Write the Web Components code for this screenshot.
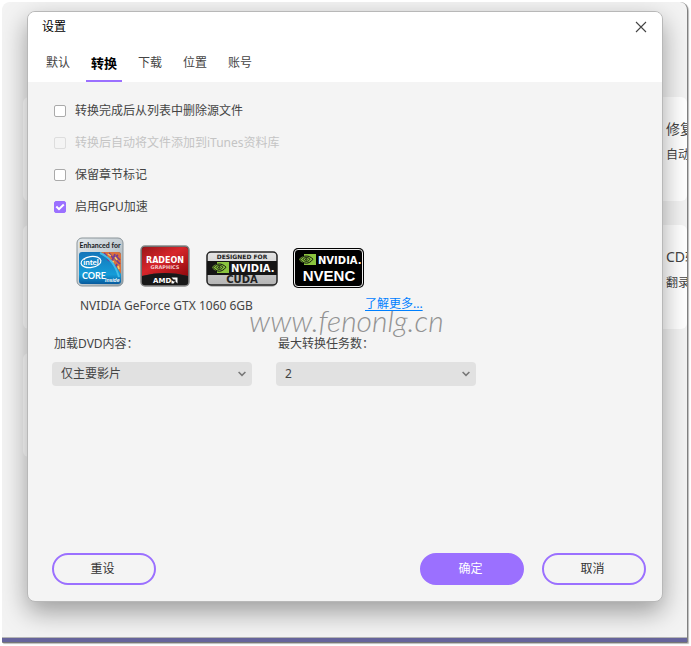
<!DOCTYPE html>
<html lang="zh-CN">
<head>
<meta charset="utf-8">
<title>设置</title>
<style>
html, body { height: 100%; }
body { margin: 0; padding: 2px 3px 3px 2px; box-sizing: border-box; background: #fff; color: #444; font: 12px/18px "Noto Sans", "Noto Sans CJK SC", sans-serif; }
</style>
</head>
<body>
<app-window>
  <feature-card></feature-card>
  <feature-card class="side"><span slot="title">修复</span>自动</feature-card>
  <feature-card></feature-card>
  <feature-card class="side"><span slot="title">CD转换</span>翻录</feature-card>
  <feature-card></feature-card>
  <settings-dialog slot="dialog"></settings-dialog>
</app-window>
<script>
function define(name, html, setup) {
  const template = document.createElement('template');
  template.innerHTML = html;
  customElements.define(name, class extends HTMLElement {
    constructor() {
      super();
      this.attachShadow({ mode: 'open' }).append(template.content.cloneNode(true));
    }
    connectedCallback() { if (setup) setup(this, this.shadowRoot); }
  });
}

define('feature-card', `
<style>
:host { display: block; background: #fff; border-radius: 6px; overflow: hidden; white-space: nowrap; padding-top: 21px; box-sizing: border-box; }
:host(.side) { padding-left: 67px; grid-column: 2; }
h3 { margin: 0 0 6px; font-size: 14px; line-height: 22px; font-weight: 400; }
</style>
<h3><slot name="title"></slot></h3><slot></slot>`);

define('app-window', `
<style>
:host { display: block; position: relative; box-sizing: border-box; height: 100%; min-height: 480px; background: #f3f3f3; border-right: 1px solid #808080; border-bottom: 1px solid #777; border-radius: 8px 8px 1px 1px; overflow: hidden; box-shadow: 1px 1px 1px #bbb; }
.home { display: grid; grid-template-columns: 1fr 88px; grid-auto-rows: 104px; gap: 24px 20px; padding: 95px 0 0 21px; }
.edge { position: absolute; inset: auto 0 0 0; height: 4px; background: #66649b; border-top: 1px solid #b5b5b5; }
</style>
<div class="home"><slot></slot></div>
<div class="edge"></div>
<slot name="dialog"></slot>`);

define('tab-strip', `
<style>
:host { display: flex; gap: 11px; padding: 0 13px; }
button { border: 0; background: none; padding: 4px 5px 0; height: 40px; font: inherit; color: #444; border-bottom: 2px solid transparent; }
button[aria-selected="true"] { font-size: 13px; font-weight: 700; color: #000; border-color: #9b70ff; }
</style>
<button role="tab">默认</button><button role="tab" aria-selected="true">转换</button><button role="tab">下载</button><button role="tab">位置</button><button role="tab">账号</button>`,
(host) => host.setAttribute('role', 'tablist'));

define('check-option', `
<style>
:host { display: block; }
label { display: flex; align-items: center; gap: 9px; height: 32px; width: max-content; }
.box { display: grid; width: 12px; height: 12px; }
input, svg { grid-area: 1 / 1; width: 12px; height: 12px; }
input { appearance: none; margin: 0; box-sizing: border-box; border: 1px solid #aaa; border-radius: 2px; background: #fff; }
input:checked { background: #9b70ff; border-color: #9b70ff; }
svg { visibility: hidden; pointer-events: none; }
input:checked + svg { visibility: visible; }
:host([disabled]) label { color: #c4c4c4; }
:host([disabled]) input { border-color: #ddd; background: #f4f4f4; }
</style>
<label><span class="box"><input type="checkbox"><svg viewBox="0 0 12 12" fill="none" stroke="#fff" stroke-width="2"><path d="M2.3 5.5 5 8.2 9.8 3.5"/></svg></span><span><slot></slot></span></label>`,
(host, root) => {
  const input = root.querySelector('input');
  input.checked = host.hasAttribute('checked');
  input.disabled = host.hasAttribute('disabled');
});

define('select-field', `
<style>
:host { display: block; width: 200px; }
label { display: block; padding-left: 2px; margin-bottom: 9px; }
.field { display: grid; align-items: center; }
select, svg { grid-area: 1 / 1; }
select { appearance: none; width: 100%; height: 24px; border: 0; border-radius: 4px; background: #e1e1e1; padding: 0 28px 0 9px; font: inherit; color: #444; }
svg { justify-self: end; margin-right: 6px; width: 8px; height: 6px; pointer-events: none; }
</style>
<label for="s"></label>
<div class="field"><select id="s"><option></option></select><svg viewBox="0 0 8 6" fill="none" stroke="#777" stroke-width="1.5"><path d="m.6 1 3.4 3.4L7.4 1"/></svg></div>`,
(host, root) => {
  root.querySelector('label').textContent = host.getAttribute('label');
  root.querySelector('option').textContent = host.getAttribute('value');
});

define('pill-button', `
<style>
:host { display: block; }
button { display: block; width: 104px; height: 32px; box-sizing: border-box; border: 2px solid #9b70ff; border-radius: 16px; background: #f4f4f4; color: #333; font: inherit; padding: 0 3px 0 0; }
:host([primary]) button { background: #9b70ff; color: #fff; }
</style>
<button type="button"><slot></slot></button>`);

const nvidiaEye = `<path fill="#8ac43e" d="M5 0h12v11H5V9C2.700 8.600 1 7 0 5.500 1.200 3.700 3 2.500 5 2Z"/><g fill="none" stroke="#111"><path d="M1.200 5.600C4 1 10 .8 14 5.200 10 10.600 4.600 10.300 1.200 5.600Z"/><path d="M4 5.400C5.600 2.800 9 2.900 11 5.300 9 8.200 5.800 8 4 5.400Z"/><circle cx="7.300" cy="5.400" r=".8"/></g>`;

define('gpu-badges', `
<style>
:host { display: flex; align-items: flex-end; gap: 15px; }
svg { display: block; }
text { font-family: "DejaVu Sans", sans-serif; font-weight: 700; }
.l { font-family: "Liberation Sans", sans-serif; }
.n { font-family: "Lato", sans-serif; }
</style>
<svg width="49" height="52" viewBox="0 0 49 52" role="img" aria-label="Intel Core">
  <defs><linearGradient id="a" x2="1" y2="1"><stop stop-color="#e2e8eb"/><stop offset=".5" stop-color="#c5ced3"/><stop offset="1" stop-color="#8fa0aa"/></linearGradient><linearGradient id="b" x2="0" y2="1"><stop stop-color="#1475b9"/><stop offset=".7" stop-color="#159cd8"/><stop offset="1" stop-color="#075a9d"/></linearGradient></defs>
  <rect x="1" y="2" width="46" height="48" rx="5" fill="url(#a)" stroke="#8a9499"/>
  <rect x="3" y="16" width="42" height="32" rx="3" fill="url(#b)"/>
  <path d="M24 16h18q3 0 3 3v19C41 31 35 22 24 16Z" fill="#db713b"/>
  <path d="m28 17 3 3m2-3 4 5m2-4-3 7m3-2 5 5m-2-9-4 3m3 6-2 4m-8-9 3 2m6-5 4 4" stroke="#763e91" stroke-width="1.700"/><path d="m32 18 3 2m4 1 2 3m-6 1 3 1m4 4 1 3" stroke="#f5ca64" stroke-width="1.500"/>
  <path d="M24 17q14 6 19 24" fill="none" stroke="#42bce6" stroke-width="2"/>
  <text class="n" x="24" y="12" text-anchor="middle" font-size="7" fill="#16191c">Enhanced for</text>
  <ellipse cx="15" cy="26" rx="10" ry="5.500" fill="none" stroke="#fff" stroke-width="1.200" transform="rotate(-8 15 26)"/>
  <text class="n" x="15" y="29" text-anchor="middle" font-size="8" fill="#fff">intel</text>
  <text class="n" x="6" y="43" font-size="9" fill="#fff">CORE</text>
  <text class="l" x="29" y="46" font-size="5" font-style="italic" fill="#fff">inside</text>
</svg>
<svg width="51" height="44" viewBox="0 0 51 44" role="img" aria-label="AMD Radeon Graphics">
  <defs><linearGradient id="r" x2="1" y2="1"><stop stop-color="#9a1519"/><stop offset=".45" stop-color="#d7262b"/><stop offset="1" stop-color="#8f090d"/></linearGradient></defs>
  <rect x="1" y="2" width="48" height="40" rx="4" fill="#333" stroke="#868686" stroke-width="1.500"/>
  <path d="M2 6q0-3 3-3h40q3 0 3 3v26Q25 26 2 32Z" fill="url(#r)"/>
  <path d="M2 32Q25 26 48 32v6q0 3-3 3H5q-3 0-3-3Z" fill="#181818"/>
  <text x="25" y="19" text-anchor="middle" font-size="8" fill="#fff">RADEON</text>
  <text x="25" y="25" text-anchor="middle" font-size="5" fill="#f3c8c8">GRAPHICS</text>
  <text x="13" y="39" font-size="7" fill="#fff">AMD</text><path d="M31.500 33.500h6v6l-2-2v-2h-2Zm0 2.500 2 1.500h1.500l-1.500 2h-2Z" fill="#fff"/>
</svg>
<svg width="72" height="38" viewBox="0 0 72 38" role="img" aria-label="NVIDIA CUDA">
  <defs><linearGradient id="c" x2="0" y2="1"><stop stop-color="#e5e5e5"/><stop offset="1" stop-color="#b4b4b4"/></linearGradient></defs>
  <rect x="1" y="2" width="70" height="35" rx="5" fill="#888" opacity=".5"/>
  <rect x="1" y="2" width="70" height="33" rx="4" fill="url(#c)" stroke="#222" stroke-width="1.500"/>
  <path d="M1 11h70v14H1Z" fill="#151515"/>
  <text x="36" y="9" text-anchor="middle" font-size="6" fill="#222">DESIGNED FOR</text>
  <g transform="translate(6 12)">${nvidiaEye}</g>
  <text x="25" y="22" font-size="10" fill="#fff">NVIDIA.</text>
  <text x="36" y="33" text-anchor="middle" font-size="10" fill="#222">CUDA</text>
</svg>
<svg width="72" height="41" viewBox="0 0 72 41" role="img" aria-label="NVIDIA NVENC">
  <rect x="0" y="1" width="71" height="40" rx="5" fill="#000"/><rect x="1.500" y="2.500" width="68" height="37" rx="3.500" fill="#000" stroke="#eee"/>
  <g transform="translate(6 7)">${nvidiaEye}</g>
  <text x="25" y="17" font-size="10" fill="#fff">NVIDIA.</text>
  <text class="l" x="36" y="34" text-anchor="middle" font-size="15" fill="#fff">NVENC</text>
</svg>`);

define('settings-dialog', `
<style>
:host { position: absolute; inset: 9px 24px 40px 25px; display: flex; flex-direction: column; box-sizing: border-box; background: #f4f4f4; border: 1px solid #b8b8b8; border-radius: 8px; overflow: hidden; box-shadow: 0 10px 26px rgba(0,0,0,.36); }
header { background: #fff; }
.title { display: flex; align-items: center; justify-content: space-between; height: 30px; padding: 0 15px 0 14px; color: #000; }
h1 { margin: 0; font-size: 12px; font-weight: 400; }
.close { border: 0; padding: 0; background: none; width: 12px; height: 12px; }
.close svg { display: block; }
main { flex: 1; padding: 13px 24px 0; }
check-option { margin-left: 2px; }
gpu-badges { margin: 13px 0 0 24px; }
.gpu { display: grid; grid-template-columns: 285px 1fr; margin: 9px 0 20px 28px; }
a { color: #0080ff; width: max-content; line-height: 14px; text-underline-offset: 2px; }
.fields { display: flex; gap: 24px; }
footer { display: flex; gap: 18px; padding: 0 16px 16px 24px; }
.reset { margin-right: auto; }
.mark { position: absolute; left: 221px; top: 292px; font: italic 300 30px/32px "Lato", cursive; color: #929292; pointer-events: none; }
</style>
<header>
  <div class="title"><h1>设置</h1><button class="close" aria-label="关闭"><svg width="12" height="12" viewBox="0 0 12 12" stroke="#444" stroke-width="1.1"><path d="m1 1 10 10M11 1 1 11"/></svg></button></div>
  <tab-strip></tab-strip>
</header>
<main>
  <check-option>转换完成后从列表中删除源文件</check-option>
  <check-option disabled>转换后自动将文件添加到iTunes资料库</check-option>
  <check-option>保留章节标记</check-option>
  <check-option checked>启用GPU加速</check-option>
  <gpu-badges></gpu-badges>
  <div class="gpu"><span>NVIDIA GeForce GTX 1060 6GB</span><a href="#">了解更多...</a></div>
  <div class="fields"><select-field label="加载DVD内容：" value="仅主要影片"></select-field><select-field label="最大转换任务数：" value="2"></select-field></div>
</main>
<footer><pill-button class="reset">重设</pill-button><pill-button primary>确定</pill-button><pill-button>取消</pill-button></footer>
<div class="mark">www.fenonlg.cn</div>`);
</script>
</body>
</html>
